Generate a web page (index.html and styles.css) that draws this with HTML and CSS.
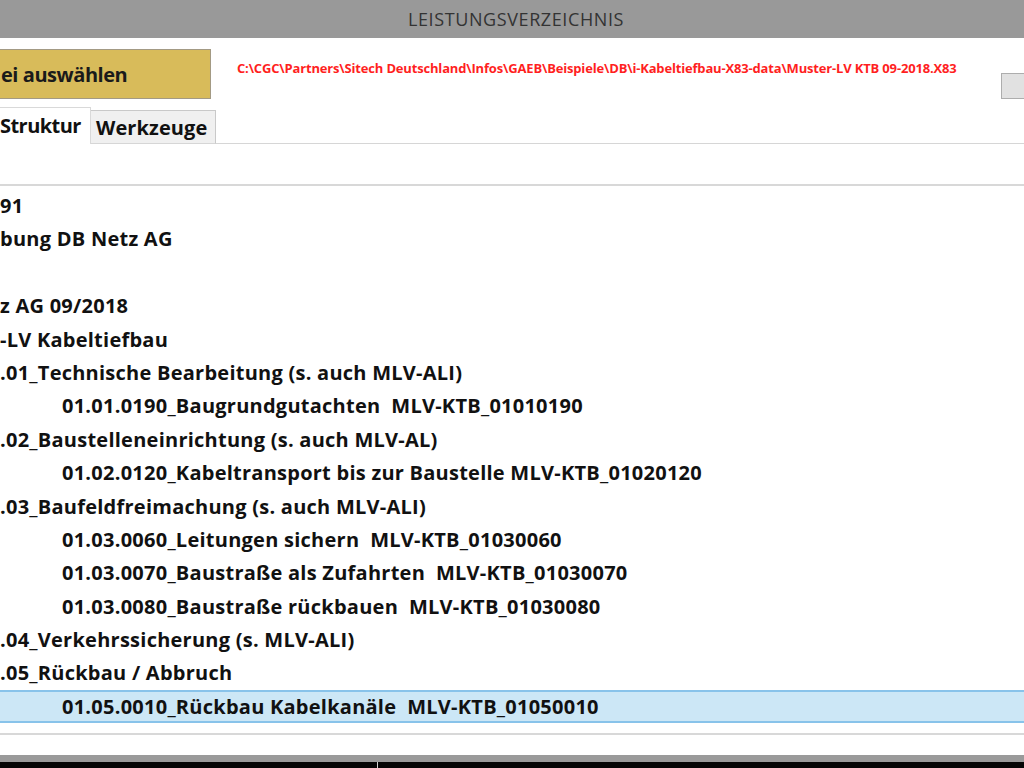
FILE: index.html
```html
<!DOCTYPE html>
<html lang="de">
<head>
  <meta charset="UTF-8" />
  <title>Leistungsverzeichnis</title>
  <link rel="stylesheet" href="styles.css">
</head>
<body>
  <div class="window">
    <div class="titlebar">LEISTUNGSVERZEICHNIS</div>

    <!-- Datei-Auswahl -->
    <div class="toolbar">
      <button class="file-btn">ei auswählen</button>
      <div class="file-path">C:\CGC\Partners\Sitech Deutschland\Infos\GAEB\Beispiele\DB\i-Kabeltiefbau-X83-data\Muster-LV KTB 09-2018.X83</div>
      <button class="side-btn"></button>
    </div>

    <!-- Tabs -->
    <div class="tabs">
      <div class="tab active">Struktur</div>
      <div class="tab">Werkzeuge</div>
      <div class="tab-rest"></div>
    </div>

    <div class="filter-space"></div>

    <!-- LV-Baum -->
    <div class="tree">
      <div class="row">91</div>
      <div class="row">bung DB Netz AG</div>
      <div class="row"></div>
      <div class="row">z AG 09/2018</div>
      <div class="row">-LV Kabeltiefbau</div>
      <div class="row">.01_Technische Bearbeitung (s. auch MLV-ALI)</div>
      <div class="row child">01.01.0190_Baugrundgutachten&nbsp; MLV-KTB_01010190</div>
      <div class="row">.02_Baustelleneinrichtung (s. auch MLV-AL)</div>
      <div class="row child">01.02.0120_Kabeltransport bis zur Baustelle MLV-KTB_01020120</div>
      <div class="row">.03_Baufeldfreimachung (s. auch MLV-ALI)</div>
      <div class="row child">01.03.0060_Leitungen sichern&nbsp; MLV-KTB_01030060</div>
      <div class="row child">01.03.0070_Baustraße als Zufahrten&nbsp; MLV-KTB_01030070</div>
      <div class="row child">01.03.0080_Baustraße rückbauen&nbsp; MLV-KTB_01030080</div>
      <div class="row">.04_Verkehrssicherung (s. MLV-ALI)</div>
      <div class="row">.05_Rückbau / Abbruch</div>
      <div class="row child selected">01.05.0010_Rückbau Kabelkanäle&nbsp; MLV-KTB_01050010</div>
      <div class="row cut"></div>
    </div>

    <div class="bottom-space"></div>
    <div class="taskbar">
      <div class="task-left"></div>
      <div class="task-right"></div>
    </div>
  </div>
</body>
</html>
```

FILE: styles.css
```css
html, body {
  margin: 0;
  padding: 0;
  background: #ffffff;
}

body {
  font-family: "Open Sans", "Noto Sans", sans-serif;
  color: #111;
}

.window {
  width: 1024px;
  height: 768px;
  display: flex;
  flex-direction: column;
  overflow: hidden;
}

.titlebar {
  height: 38px;
  flex: none;
  background: #999999;
  color: #333;
  font-size: 18px;
  letter-spacing: 0.6px;
  line-height: 38px;
  text-align: center;
  padding-left: 8px;
  box-sizing: border-box;
}

.toolbar {
  height: 69px;
  flex: none;
  display: flex;
  align-items: flex-start;
}

.file-btn {
  margin-top: 11px;
  margin-left: -30px;
  width: 241px;
  height: 50px;
  background: #d8bb5a;
  border: 1px solid #a39a84;
  box-sizing: border-box;
  font-family: inherit;
  font-size: 20px;
  font-weight: 700;
  color: #1a1a1a;
  text-align: left;
  padding: 0 0 0 30px;
  letter-spacing: -0.45px;
}

.file-path {
  margin-top: 21px;
  margin-left: 26px;
  font-size: 13px;
  font-weight: 700;
  color: #ff1f1f;
  white-space: nowrap;
  letter-spacing: -0.17px;
}

.side-btn {
  margin-top: 35px;
  margin-left: auto;
  width: 26px;
  height: 26px;
  margin-right: -3px;
  background: #e1e1e1;
  border: 1px solid #adadad;
  box-sizing: border-box;
}

.tabs {
  height: 37px;
  flex: none;
  display: flex;
  align-items: flex-end;
}

.tab {
  font-size: 20px;
  font-weight: 700;
  letter-spacing: 0.1px;
  box-sizing: border-box;
}

.tab.active {
  height: 37px;
  width: 91px;
  background: #fff;
  border-right: 1px solid #d9d9d9;
  border-top: 1px solid #d9d9d9;
  line-height: 36px;
  letter-spacing: -0.55px;
}

.tab:not(.active) {
  height: 34px;
  width: 125px;
  background: #f0f0f0;
  border: 1px solid #c9c9c9;
  border-left: none;
  border-bottom-color: #d6d6d6;
  line-height: 33px;
  padding-left: 5px;
}

.tab-rest {
  flex: 1;
  height: 1px;
  background: #d6d6d6;
}

.filter-space {
  height: 40px;
  flex: none;
  border-bottom: 2px solid #d8d8d8;
}

.tree {
  flex: none;
  height: 544px;
  padding-top: 3px;
  border-bottom: 2px solid #d8d8d8;
  overflow: hidden;
}

.row {
  height: 33.4px;
  line-height: 33.4px;
  font-size: 20px;
  font-weight: 700;
  white-space: nowrap;
  letter-spacing: 0.25px;
  box-sizing: border-box;
}

.row.child {
  padding-left: 62px;
}

.row.selected {
  background: #cce7f6;
  border-top: 2px solid #88c3ea;
  border-bottom: 2px solid #88c3ea;
  line-height: 29.4px;
}

.row.cut {
  height: 12px;
}

.bottom-space {
  flex: 1;
}

.taskbar {
  height: 13px;
  flex: none;
  display: flex;
  flex-direction: column;
}

.task-left {
  height: 7px;
  background: #9a9a9a;
}

.task-right {
  flex: 1;
  background: #050505;
  background-image: linear-gradient(#d0d0d0, #d0d0d0);
  background-size: 1px 100%;
  background-position: 377px 0;
  background-repeat: no-repeat;
}
```
